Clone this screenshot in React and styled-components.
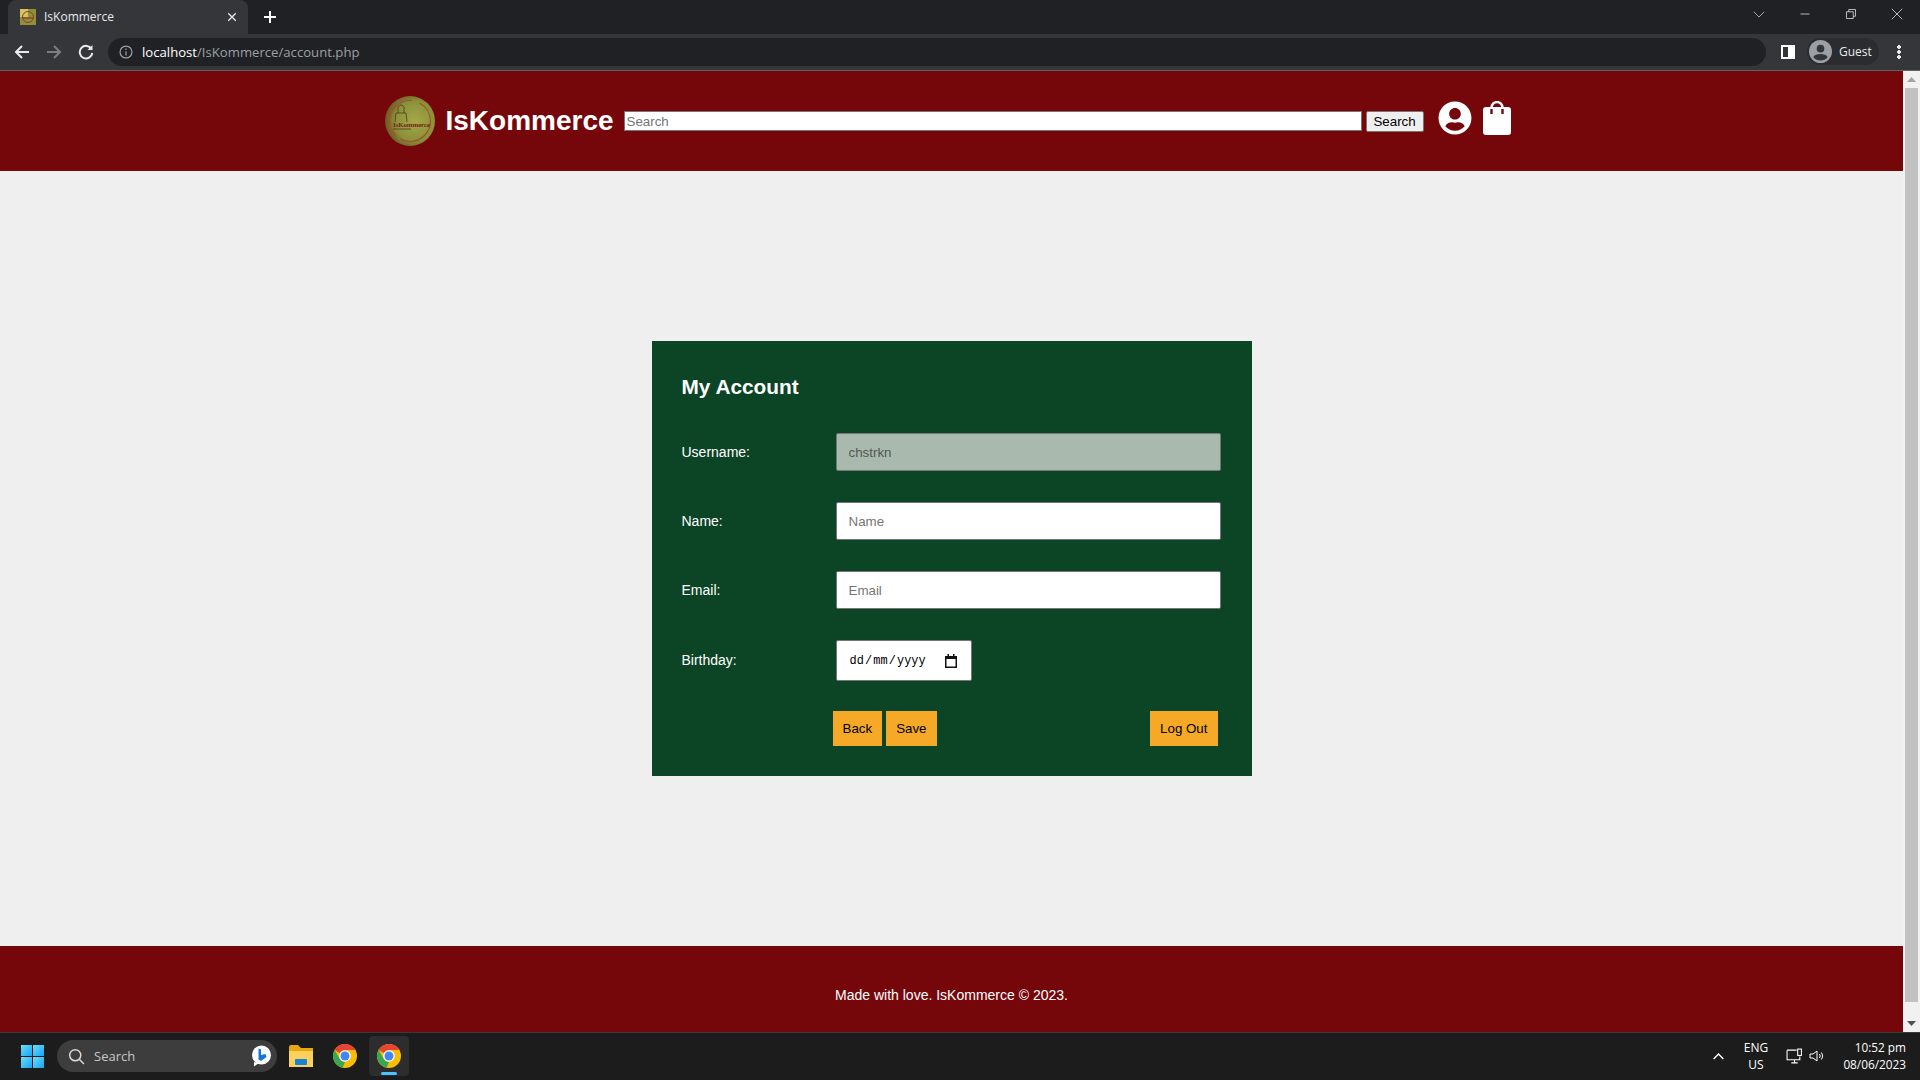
import React from "react";
import styled, { createGlobalStyle } from "styled-components";
import { FaUserCircle } from "react-icons/fa";

const GlobalStyle = createGlobalStyle`
  html, body {
    margin: 0;
    padding: 0;
    height: 100%;
    overflow: hidden;
    background: #efefef;
  }
  * {
    box-sizing: border-box;
  }
`;

const uiFont = `"Open Sans", "Noto Sans", sans-serif`;
const pageFont = `"Liberation Sans", Arial, sans-serif`;

const Screen = styled.div`
  width: 1920px;
  height: 1080px;
  display: flex;
  flex-direction: column;
  overflow: hidden;
`;

/* browser window */
const TabStrip = styled.div`
  height: 34px;
  background: #202124;
  display: flex;
  align-items: flex-end;
  padding-left: 8px;
  flex: none;
`;

const Tab = styled.div`
  width: 240px;
  height: 34px;
  background: #35363a;
  border-radius: 8px 8px 0 0;
  display: flex;
  align-items: center;
  padding: 0 10px 1px 12px;
  color: #e8eaed;
  font: 12px ${uiFont};
`;

const TabTitle = styled.span`
  margin-left: 8px;
  flex: 1;
`;

const NewTab = styled.div`
  width: 16px;
  height: 16px;
  margin: 0 0 9px 14px;
  display: flex;
`;

const WindowControls = styled.div`
  margin-left: auto;
  height: 34px;
  display: flex;
  align-items: center;
  padding: 0 17px 6px 0;
  gap: 34px;
`;

const Toolbar = styled.div`
  height: 37px;
  background: #35363a;
  border-bottom: 1px solid #5f6368;
  display: flex;
  align-items: center;
  flex: none;
  padding: 0 0 1px 14px;
`;

const NavButton = styled.div`
  width: 16px;
  height: 16px;
  display: flex;
  margin-right: ${(props) => props.$gap || 16}px;
`;

const AddressBar = styled.div`
  width: 1658px;
  height: 28px;
  border-radius: 14px;
  background: #202124;
  display: flex;
  align-items: center;
  padding-left: 11px;
  margin-left: -1px;
  font: 13.15px ${uiFont};
  color: #9aa0a6;
`;

const Host = styled.span`
  color: #fff;
  margin-left: 9px;
`;

const SideToggle = styled.div`
  width: 14px;
  height: 14px;
  margin-left: 15px;
  border: 2px solid #fff;
  border-right-width: 7px;
`;

const GuestPill = styled.div`
  width: 72px;
  height: 27px;
  margin-left: 12px;
  border-radius: 14px;
  background: #2b2c2f;
  display: flex;
  align-items: center;
  padding-left: 2px;
  gap: 7px;
  color: #e8eaed;
  font: 12px ${uiFont};
`;

const MenuDots = styled.div`
  width: 4px;
  height: 14px;
  margin-left: 18px;
  background: radial-gradient(circle at 2px 2px, #e8eaed 1.6px, transparent 2px) 0 0 / 4px 5px;
`;

/* page */
const Viewport = styled.div`
  flex: 1;
  display: flex;
  min-height: 0;
`;

const Page = styled.div`
  flex: 1;
  display: flex;
  flex-direction: column;
  font-family: ${pageFont};
  background: #efefef;
`;

const Header = styled.header`
  height: 100px;
  flex: none;
  background: #75070b;
  display: flex;
  align-items: center;
  justify-content: center;
  padding-right: 7px;
`;

const Brand = styled.h1`
  margin: 0 10px 0 10px;
  font-size: 28px;
  font-weight: 700;
  color: #fff;
`;

const SearchForm = styled.form`
  display: flex;
  align-items: center;
  gap: 4px;
`;

const SearchInput = styled.input`
  width: 738px;
  font: 13.33px ${pageFont};
  padding: 1px 2px;
  border: 1px solid #767676;
  height: 20px;
  background: #fff;
`;

const SearchButton = styled.button`
  width: 58px;
  height: 21px;
  padding: 1px 6px;
  font: 13.33px ${pageFont};
  color: #000;
  background: #efefef;
  border: 1px solid #767676;
  border-radius: 2px;
`;

const IconLink = styled.a`
  display: flex;
  color: #fff;
  margin: 0 0 6px ${(props) => props.$gap}px;
`;

const Content = styled.main`
  flex: 1;
  display: flex;
  align-items: center;
  justify-content: center;
`;

const Card = styled.form`
  width: 600px;
  height: 435px;
  background: #0c4426;
  padding: 30px 31px 30px 30px;
  display: flex;
  flex-direction: column;
`;

const CardTitle = styled.h2`
  margin: 0 0 30px;
  height: 32px;
  line-height: 32px;
  font-size: 20.8px;
  font-weight: 700;
  color: #fff;
`;

const Row = styled.div`
  display: flex;
  align-items: center;
  margin-bottom: ${(props) => props.$gap || 31}px;
`;

const Label = styled.label`
  width: 154px;
  font-size: 14px;
  color: #fff;
  margin-bottom: ${(props) => props.$lift || 0}px;
`;

const TextField = styled.input`
  width: 385px;
  height: 38px;
  padding: 0 12px;
  font: 13.33px ${pageFont};
  color: #555;
  background: ${(props) => (props.disabled ? "#a9b9ad" : "#fff")};
  border: 1px solid #767676;
  border-radius: 2px;
  opacity: 1;

  &::placeholder {
    color: #757575;
  }
`;

const DateField = styled.div`
  width: 136px;
  height: 41px;
  padding: 0 14px 0 13px;
  display: flex;
  align-items: center;
  justify-content: space-between;
  background: #fff;
  border: 1px solid #767676;
  border-radius: 2px;
  font: 11.9px "Liberation Mono", monospace;
  color: #000;
`;

const DateSlash = styled.span`
  margin: 0 1.2px;
`;

const Actions = styled.div`
  display: flex;
  gap: 4px;
  margin: 0 3px 0 151px;
`;

const ActionButton = styled.button`
  height: 35px;
  padding: 0 10px;
  border: none;
  background: #f5a927;
  color: #000;
  font: 13.33px ${pageFont};
  margin-left: ${(props) => (props.$push ? "auto" : "0")};
`;

const Footer = styled.footer`
  height: 86px;
  flex: none;
  background: #75070b;
  display: flex;
  align-items: center;
  justify-content: center;
  padding-top: 12px;
  color: #fff;
  font-size: 14px;
`;

const Scrollbar = styled.div`
  width: 17px;
  background: #f1f1f1;
  display: flex;
  flex-direction: column;
  align-items: center;
  flex: none;
`;

const ScrollArrow = styled.div`
  height: 17px;
  width: 100%;
  display: flex;
  align-items: center;
  justify-content: center;
  color: #a3a3a3;
`;

const ScrollThumb = styled.div`
  width: 13px;
  flex: 1;
  margin-bottom: 13px;
  background: #c1c1c1;
`;

/* windows taskbar */
const Taskbar = styled.div`
  height: 48px;
  flex: none;
  background: #1c1c1c;
  border-top: 1px solid #3a3a3a;
  display: flex;
  align-items: center;
  padding: 0 14px 1px 21px;
  font-family: ${uiFont};
  color: #fff;
`;

const StartIcon = styled.div`
  width: 23px;
  height: 23px;
  display: grid;
  grid-template-columns: 1fr 1fr;
  gap: 1px;
`;

const StartPane = styled.div`
  background: linear-gradient(135deg, #6fdcfb, #12a5f4);
`;

const TaskSearch = styled.div`
  width: 220px;
  height: 32px;
  margin-left: 13px;
  border-radius: 16px;
  background: #3d3d3d;
  display: flex;
  align-items: center;
  padding: 0 6px 0 11px;
  gap: 9px;
  font-size: 13px;
  color: #c8c8c8;
`;

const Spring = styled.span`
  flex: 1;
`;

const TaskIcon = styled.div`
  width: 40px;
  height: 40px;
  display: flex;
  align-items: center;
  justify-content: center;
  position: relative;
  margin-left: 4px;
  background: ${(props) => (props.$active ? "#2d2d2d" : "transparent")};
  border-radius: 4px;
`;

const ActiveMark = styled.span`
  position: absolute;
  left: 12px;
  bottom: 1px;
  width: 16px;
  height: 3px;
  border-radius: 2px;
  background: #4cc2ff;
`;

const Tray = styled.div`
  margin-left: auto;
  display: flex;
  align-items: center;
`;

const TrayLang = styled.div`
  width: 40px;
  margin-left: 11px;
  font-size: 12px;
  line-height: 17px;
  text-align: center;
`;

const TrayIcons = styled.div`
  display: flex;
  align-items: center;
  gap: 6px;
  margin-left: 10px;
`;

const Clock = styled.div`
  width: 64px;
  margin-left: 17px;
  font-size: 11.8px;
  line-height: 17px;
  text-align: right;
  white-space: nowrap;
`;

const Stroke = ({ size = 16, children, width = 2, color = "currentColor" }) => (
  <svg width={size} height={size} viewBox="0 0 16 16" fill="none" stroke={color} strokeWidth={width}>
    {children}
  </svg>
);

const Logo = ({ size = 50 }) => (
  <svg width={size} height={size} viewBox="0 0 50 50">
    <defs>
      <radialGradient id="logoFill" cx="0.6" cy="0.5" r="0.62">
        <stop offset="0" stopColor="#a6a848" />
        <stop offset="0.65" stopColor="#8b9039" />
        <stop offset="1" stopColor="#6a4f22" />
      </radialGradient>
    </defs>
    <circle cx="25" cy="25" r="25" fill="url(#logoFill)" />
    <circle cx="25" cy="25" r="20.5" fill="none" stroke="#a0512f" strokeWidth="1.2" strokeDasharray="42 6 50 8" />
    <path d="M10 26 L11 17 H21 L22 26 M13 17 V11 Q16 7 19 11 V17 M8 33 H26" fill="none" stroke="#4d3a1c" strokeWidth="0.8" />
    <text x="8" y="30.5" fontFamily="Liberation Serif, serif" fontSize="7" fontWeight="700" fill="#75251a" textLength="37">
      IsKommerce
    </text>
  </svg>
);

const BagIcon = () => (
  <svg width="28" height="34" viewBox="0 0 28 34">
    <rect y="6" width="28" height="28" rx="3" fill="#fff" />
    <path d="M8.5 12 V6.5 A5.5 5.5 0 0 1 19.5 6.5 V12" fill="none" stroke="#fff" strokeWidth="2.4" />
    <rect x="7.3" y="8" width="2.4" height="5" fill="#75070b" />
    <rect x="18.3" y="8" width="2.4" height="5" fill="#75070b" />
  </svg>
);

const Favicon = () => (
  <svg width="16" height="16" viewBox="0 0 16 16">
    <rect width="16" height="16" fill="#8f9139" />
    <rect width="8" height="8" fill="#d4c35e" />
    <circle cx="8" cy="8" r="5.5" fill="none" stroke="#9c3a2a" strokeWidth="1" />
    <path d="M3 9 H13" stroke="#7a2a1e" strokeWidth="1" />
  </svg>
);

const ChromeLogo = () => (
  <svg width="24" height="24" viewBox="0 0 24 24">
    <circle cx="12" cy="12" r="12" fill="#fbbc04" />
    <path d="M12 0 A12 12 0 0 1 22.4 6 H12 A6 6 0 0 0 6.8 9 L1.6 6 A12 12 0 0 1 12 0Z" fill="#ea4335" />
    <path d="M1.6 6 L6.8 15 A6 6 0 0 0 12 18 L9.5 23.7 A12 12 0 0 1 1.6 6Z" fill="#34a853" />
    <circle cx="12" cy="12" r="5.8" fill="#fff" />
    <circle cx="12" cy="12" r="4.5" fill="#4285f4" />
  </svg>
);

const App = () => (
  <Screen>
    <GlobalStyle />
    <TabStrip>
      <Tab>
        <Favicon />
        <TabTitle>IsKommerce</TabTitle>
        <Stroke size={12} width={1.8} color="#e8eaed">
          <path d="M3 3 L13 13 M13 3 L3 13" />
        </Stroke>
      </Tab>
      <NewTab>
        <Stroke width={2} color="#fff">
          <path d="M8 2 V14 M2 8 H14" />
        </Stroke>
      </NewTab>
      <WindowControls>
        <Stroke size={12} width={1} color="#d0d0d0">
          <path d="M1 5 L8 12 L15 5" />
        </Stroke>
        <Stroke size={12} width={1} color="#e8eaed">
          <path d="M2 8 H14" />
        </Stroke>
        <Stroke size={12} width={1} color="#e8eaed">
          <path d="M2 5 H11 V14 H2 Z M5 5 V2 H14 V11 H11" />
        </Stroke>
        <Stroke size={12} width={1} color="#e8eaed">
          <path d="M1 1 L15 15 M15 1 L1 15" />
        </Stroke>
      </WindowControls>
    </TabStrip>

    <Toolbar>
      <NavButton>
        <Stroke color="#e8eaed">
          <path d="M15 8 H2 M8 2 L2 8 L8 14" />
        </Stroke>
      </NavButton>
      <NavButton>
        <Stroke color="#7b7e83">
          <path d="M1 8 H14 M8 2 L14 8 L8 14" />
        </Stroke>
      </NavButton>
      <NavButton $gap={15}>
        <Stroke color="#e8eaed">
          <path d="M13.5 5 A6.3 6.3 0 1 0 14.3 9" />
          <path d="M14.5 1 V6 H9.5" fill="#e8eaed" stroke="none" />
        </Stroke>
      </NavButton>
      <AddressBar>
        <Stroke size={14} width={1.4} color="#9aa0a6">
          <circle cx="8" cy="8" r="6.8" />
          <path d="M8 7 V12 M8 4 V5.6" />
        </Stroke>
        <Host>localhost</Host>/IsKommerce/account.php
      </AddressBar>
      <SideToggle />
      <GuestPill>
        <svg width="23" height="23" viewBox="0 0 24 24">
          <circle cx="12" cy="12" r="12" fill="#9aa0a6" />
          <circle cx="12" cy="9" r="4" fill="#35363a" />
          <path d="M4.5 18 C6 13.5 18 13.5 19.5 18 A10 10 0 0 1 4.5 18Z" fill="#35363a" />
        </svg>
        Guest
      </GuestPill>
      <MenuDots />
    </Toolbar>

    <Viewport>
      <Page>
        <Header>
          <Logo />
          <Brand>IsKommerce</Brand>
          <SearchForm onSubmit={(e) => e.preventDefault()}>
            <SearchInput placeholder="Search" />
            <SearchButton type="button">Search</SearchButton>
          </SearchForm>
          <IconLink $gap={14}>
            <FaUserCircle size={34} />
          </IconLink>
          <IconLink $gap={11}>
            <BagIcon />
          </IconLink>
        </Header>

        <Content>
          <Card onSubmit={(e) => e.preventDefault()}>
            <CardTitle>My Account</CardTitle>
            <Row>
              <Label>Username:</Label>
              <TextField disabled value="chstrkn" readOnly />
            </Row>
            <Row>
              <Label>Name:</Label>
              <TextField placeholder="Name" />
            </Row>
            <Row>
              <Label>Email:</Label>
              <TextField placeholder="Email" />
            </Row>
            <Row $gap={30}>
              <Label $lift={2}>Birthday:</Label>
              <DateField>
                <span>
                  dd<DateSlash>/</DateSlash>mm<DateSlash>/</DateSlash>yyyy
                </span>
                <svg width="12" height="14" viewBox="0 0 12 14">
                  <path d="M0 2 H12 V14 H0Z M1.5 5 V12.5 H10.5 V5Z" fill="#111" fillRule="evenodd" />
                  <path d="M2.5 0 H4 V2 H2.5Z M8 0 H9.5 V2 H8Z" fill="#111" />
                </svg>
              </DateField>
            </Row>
            <Actions>
              <ActionButton type="button">Back</ActionButton>
              <ActionButton type="submit">Save</ActionButton>
              <ActionButton type="button" $push>
                Log Out
              </ActionButton>
            </Actions>
          </Card>
        </Content>

        <Footer>Made with love. IsKommerce © 2023.</Footer>
      </Page>
      <Scrollbar>
        <ScrollArrow>
          <svg width="9" height="5" viewBox="0 0 9 5">
            <path d="M4.5 0 L9 5 H0Z" fill="currentColor" />
          </svg>
        </ScrollArrow>
        <ScrollThumb />
        <ScrollArrow>
          <svg width="9" height="5" viewBox="0 0 9 5">
            <path d="M0 0 H9 L4.5 5Z" fill="#505050" />
          </svg>
        </ScrollArrow>
      </Scrollbar>
    </Viewport>

    <Taskbar>
      <StartIcon>
        <StartPane />
        <StartPane />
        <StartPane />
        <StartPane />
      </StartIcon>
      <TaskSearch>
        <Stroke size={17} width={1.4} color="#d8d8d8">
          <circle cx="6.8" cy="6.8" r="5.2" />
          <path d="M10.6 10.6 L15 15" />
        </Stroke>
        <span>Search</span>
        <Spring />
        <svg width="19" height="22" viewBox="0 0 19 22">
          <circle cx="9.5" cy="10" r="9.5" fill="#fff" />
          <path d="M2 17 L2 21.5 L7 18Z" fill="#fff" />
          <path d="M6.5 3.5 L9 4.5 V10 L13.5 9 L14.5 12 L9 16 L6.5 14.5Z" fill="#1478d4" />
        </svg>
      </TaskSearch>
      <TaskIcon>
        <svg width="24" height="22" viewBox="0 0 24 22">
          <path d="M0 2 Q0 0 2 0 H9 L12 3 H24 V8 H0Z" fill="#e8a711" />
          <path d="M0 6 H24 V22 H0Z" fill="#fbd15b" />
          <rect x="6" y="14" width="12" height="6" rx="1" fill="#1683d8" />
        </svg>
      </TaskIcon>
      <TaskIcon>
        <ChromeLogo />
      </TaskIcon>
      <TaskIcon $active>
        <ChromeLogo />
        <ActiveMark />
      </TaskIcon>
      <Tray>
        <Stroke size={13} width={1.7} color="#fff">
          <path d="M2 11 L8 5 L14 11" />
        </Stroke>
        <TrayLang>
          <div>ENG</div>
          <div>US</div>
        </TrayLang>
        <TrayIcons>
          <Stroke size={17} width={1} color="#fff">
            <path d="M1 2 H10 M1 2 V11 H13 V8 M5 14 H11 M8 11 V14" />
            <rect x="11" y="1" width="3.5" height="6" />
          </Stroke>
          <Stroke size={16} width={1} color="#fff">
            <path d="M1 6 H4 L8 3 V13 L4 10 H1Z M10.5 6 Q12 8 10.5 10 M12.5 4.5 Q15 8 12.5 11.5" />
          </Stroke>
        </TrayIcons>
        <Clock>
          <div>10:52 pm</div>
          <div>08/06/2023</div>
        </Clock>
      </Tray>
    </Taskbar>
  </Screen>
);

export default App;
